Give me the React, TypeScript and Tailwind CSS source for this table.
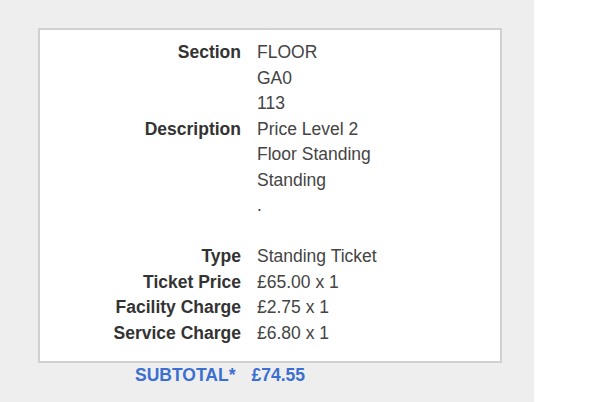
const rows: [string, string][] = [
  ['Section', 'FLOOR'],
  ['', 'GA0'],
  ['', '113'],
  ['Description', 'Price Level 2'],
  ['', 'Floor Standing'],
  ['', 'Standing'],
  ['', '.'],
  ['', ''],
  ['Type', 'Standing Ticket'],
  ['Ticket Price', '£65.00 x 1'],
  ['Facility Charge', '£2.75 x 1'],
  ['Service Charge', '£6.80 x 1'],
]

export default function App() {
  return (
    <div className="flex h-[402px] w-[600px] bg-white font-['Liberation_Sans',Arial,sans-serif]">
      <div className="w-[534px] bg-[#eeeeee] pl-[38px] pt-[28px]">
        <div className="w-[464px] border-2 border-[#d0d0d0] bg-white pb-[15px] pt-[10px]">
          <div className="grid grid-cols-[201px_1fr] gap-x-4 text-[17.5px] leading-[25.5px]">
            {rows.map(([label, value], i) => (
              <div key={i} className="contents">
                <div className="h-[25.5px] text-right font-bold text-[#333333]">{label}</div>
                <div className="h-[25.5px] text-[#444444]">{value}</div>
              </div>
            ))}
          </div>
        </div>
        <div className="flex gap-4 pl-[97px] text-[17.5px] font-bold leading-[25px] text-[#3b6fd2]">
          <span>SUBTOTAL*</span>
          <span>£74.55</span>
        </div>
      </div>
    </div>
  )
}
